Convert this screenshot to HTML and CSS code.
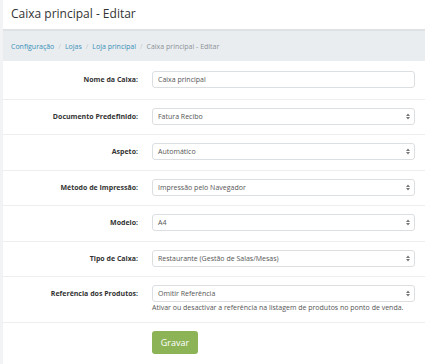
FILE: index.html
```html
<!DOCTYPE html>
<html lang="pt">

<head>
    <meta charset="UTF-8" />
    <meta name="viewport" content="width=device-width, initial-scale=1.0" />
    <title>Caixa principal - Editar</title>
    <link rel="stylesheet" href="styles.css">
</head>

<body>
    <div class="page">
        <div class="header">
            <h1 class="title">Caixa principal - Editar</h1>
        </div>
        <ol class="crumbs">
            <li><a href="#">Configuração</a></li>
            <li><a href="#">Lojas</a></li>
            <li><a href="#">Loja principal</a></li>
            <li class="current">Caixa principal - Editar</li>
        </ol>
        <form class="form">
            <div class="row first">
                <label class="label">Nome da Caixa:</label>
                <div class="field">
                    <input class="control" type="text" value="Caixa principal">
                </div>
            </div>
            <div class="row">
                <label class="label">Documento Predefinido:</label>
                <div class="field">
                    <div class="select">
                        <span>Fatura Recibo</span>
                        <svg class="arrows" width="4" height="7" viewBox="0 0 4 7"><path d="M0 3 L2 0.5 L4 3 Z M0 4 L2 6.5 L4 4 Z" fill="#777"/></svg>
                    </div>
                </div>
            </div>
            <div class="row">
                <label class="label">Aspeto:</label>
                <div class="field">
                    <div class="select">
                        <span>Automático</span>
                        <svg class="arrows" width="4" height="7" viewBox="0 0 4 7"><path d="M0 3 L2 0.5 L4 3 Z M0 4 L2 6.5 L4 4 Z" fill="#777"/></svg>
                    </div>
                </div>
            </div>
            <div class="row">
                <label class="label">Método de Impressão:</label>
                <div class="field">
                    <div class="select">
                        <span>Impressão pelo Navegador</span>
                        <svg class="arrows" width="4" height="7" viewBox="0 0 4 7"><path d="M0 3 L2 0.5 L4 3 Z M0 4 L2 6.5 L4 4 Z" fill="#777"/></svg>
                    </div>
                </div>
            </div>
            <div class="row">
                <label class="label">Modelo:</label>
                <div class="field">
                    <div class="select">
                        <span>A4</span>
                        <svg class="arrows" width="4" height="7" viewBox="0 0 4 7"><path d="M0 3 L2 0.5 L4 3 Z M0 4 L2 6.5 L4 4 Z" fill="#777"/></svg>
                    </div>
                </div>
            </div>
            <div class="row">
                <label class="label">Tipo de Caixa:</label>
                <div class="field">
                    <div class="select">
                        <span>Restaurante (Gestão de Salas/Mesas)</span>
                        <svg class="arrows" width="4" height="7" viewBox="0 0 4 7"><path d="M0 3 L2 0.5 L4 3 Z M0 4 L2 6.5 L4 4 Z" fill="#777"/></svg>
                    </div>
                </div>
            </div>
            <div class="row help-row">
                <label class="label">Referência dos Produtos:</label>
                <div class="field">
                    <div class="select">
                        <span>Omitir Referência</span>
                        <svg class="arrows" width="4" height="7" viewBox="0 0 4 7"><path d="M0 3 L2 0.5 L4 3 Z M0 4 L2 6.5 L4 4 Z" fill="#777"/></svg>
                    </div>
                    <p class="help">Ativar ou desactivar a referência na listagem de produtos no ponto de venda.</p>
                </div>
            </div>
            <div class="actions">
                <button class="btn" type="button">Gravar</button>
            </div>
        </form>
    </div>
</body>

</html>
```

FILE: styles.css
```css
body {
    margin: 0;
    background-color: #f2f3f5;
    font-family: "Open Sans", "DejaVu Sans", sans-serif;
    color: #333;
}

.page {
    margin-left: 3px;
    background-color: #fff;
    min-height: 364px;
}

.header {
    height: 29px;
    border-bottom: 2px solid #dfe2e5;
    display: flex;
    align-items: center;
    padding-left: 8px;
}

.title {
    margin: 0;
    font-size: 12px;
    font-weight: normal;
    color: #333;
    line-height: 1;
    padding-bottom: 2px;
}

.crumbs {
    list-style-type: none;
    margin: 0;
    padding: 0 0 0 8px;
    height: 30px;
    background-color: #e9edf0;
    display: flex;
    align-items: center;
    font-size: 7px;
}

.crumbs li + li:before {
    content: "/";
    color: #c3c7cb;
    padding: 0 4px;
}

.crumbs a {
    color: #3a8fb7;
    text-decoration: none;
}

.crumbs .current {
    color: #8d9297;
}

.form {
    margin: 0;
}

.row {
    display: flex;
    align-items: center;
    padding: 8px 0 9.5px;
    border-bottom: 1px solid #eceef0;
}

.row.first {
    padding-top: 10px;
    padding-bottom: 10.5px;
}

.label {
    width: 135px;
    flex-shrink: 0;
    text-align: right;
    font-size: 7px;
    font-weight: bold;
    color: #333;
    line-height: 17px;
}

.field {
    margin-left: 14px;
    width: 263px;
}

.control,
.select {
    box-sizing: border-box;
    display: block;
    width: 100%;
    height: 17px;
    border: 1px solid #dcdfe2;
    border-radius: 3px;
    background-color: #fff;
    font-family: "Open Sans", "DejaVu Sans", sans-serif;
    font-size: 7px;
    line-height: 15px;
    color: #555;
    padding: 0 5px;
    margin: 0;
}

.control {
    outline: none;
}

.select {
    position: relative;
    display: flex;
    align-items: center;
}

.arrows {
    position: absolute;
    right: 4px;
    top: 4px;
}

.help-row {
    align-items: flex-start;
    padding-bottom: 9px;
}

.help {
    margin: 1px 0 0;
    font-size: 7px;
    color: #555;
    line-height: 10px;
}

.actions {
    padding: 8px 0 0 149px;
}

.btn {
    display: block;
    width: 46px;
    height: 23px;
    border: none;
    border-radius: 3px;
    background-color: #8db357;
    color: #fff;
    font-family: "Open Sans", "DejaVu Sans", sans-serif;
    font-size: 9px;
    padding: 0;
}
```
